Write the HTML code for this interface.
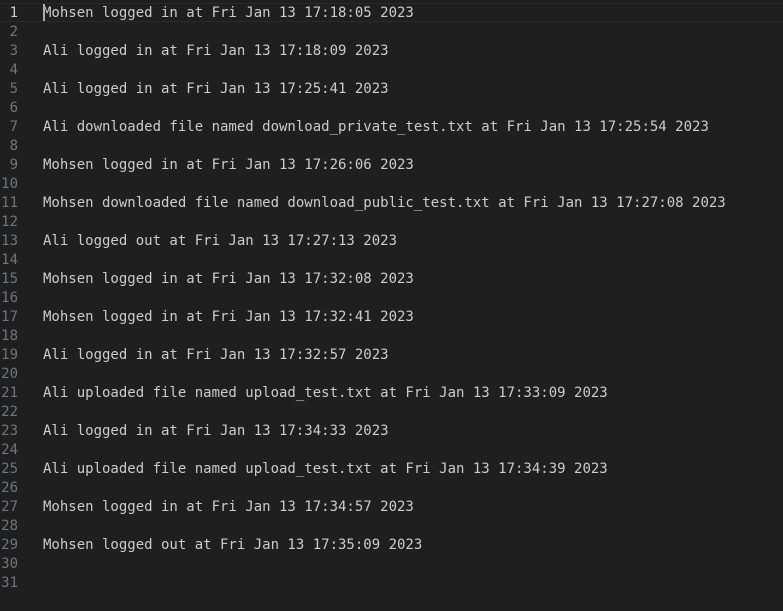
<!DOCTYPE html>
<html><head><style>
html,body{margin:0;padding:0;background:#1f1f1f;width:783px;height:611px;overflow:hidden}
.ed{position:relative;padding-top:4px;font-family:"DejaVu Sans Mono","Liberation Mono",monospace;font-size:14px;}
.l{height:19px;line-height:19px;position:relative;white-space:pre;color:#cccccc}
.n{position:absolute;left:0;width:18px;text-align:right;color:#6e7681}
.t{position:absolute;left:43px}
.cur{border-top:1px solid #2a2a2a;border-bottom:1px solid #2a2a2a;height:17px;line-height:17px;margin-top:-1px;margin-bottom:1px}
.cur .n,.cur .t{top:1px}
.cur .n{color:#cccccc}
.caret{position:absolute;left:43px;top:0;width:2px;height:17px;background:#aeafad}
</style></head><body><div class="ed">
<div class="l cur"><span class="n">1</span><span class="t">Mohsen logged in at Fri Jan 13 17:18:05 2023</span><span class="caret"></span></div>
<div class="l"><span class="n">2</span></div>
<div class="l"><span class="n">3</span><span class="t">Ali logged in at Fri Jan 13 17:18:09 2023</span></div>
<div class="l"><span class="n">4</span></div>
<div class="l"><span class="n">5</span><span class="t">Ali logged in at Fri Jan 13 17:25:41 2023</span></div>
<div class="l"><span class="n">6</span></div>
<div class="l"><span class="n">7</span><span class="t">Ali downloaded file named download_private_test.txt at Fri Jan 13 17:25:54 2023</span></div>
<div class="l"><span class="n">8</span></div>
<div class="l"><span class="n">9</span><span class="t">Mohsen logged in at Fri Jan 13 17:26:06 2023</span></div>
<div class="l"><span class="n">10</span></div>
<div class="l"><span class="n">11</span><span class="t">Mohsen downloaded file named download_public_test.txt at Fri Jan 13 17:27:08 2023</span></div>
<div class="l"><span class="n">12</span></div>
<div class="l"><span class="n">13</span><span class="t">Ali logged out at Fri Jan 13 17:27:13 2023</span></div>
<div class="l"><span class="n">14</span></div>
<div class="l"><span class="n">15</span><span class="t">Mohsen logged in at Fri Jan 13 17:32:08 2023</span></div>
<div class="l"><span class="n">16</span></div>
<div class="l"><span class="n">17</span><span class="t">Mohsen logged in at Fri Jan 13 17:32:41 2023</span></div>
<div class="l"><span class="n">18</span></div>
<div class="l"><span class="n">19</span><span class="t">Ali logged in at Fri Jan 13 17:32:57 2023</span></div>
<div class="l"><span class="n">20</span></div>
<div class="l"><span class="n">21</span><span class="t">Ali uploaded file named upload_test.txt at Fri Jan 13 17:33:09 2023</span></div>
<div class="l"><span class="n">22</span></div>
<div class="l"><span class="n">23</span><span class="t">Ali logged in at Fri Jan 13 17:34:33 2023</span></div>
<div class="l"><span class="n">24</span></div>
<div class="l"><span class="n">25</span><span class="t">Ali uploaded file named upload_test.txt at Fri Jan 13 17:34:39 2023</span></div>
<div class="l"><span class="n">26</span></div>
<div class="l"><span class="n">27</span><span class="t">Mohsen logged in at Fri Jan 13 17:34:57 2023</span></div>
<div class="l"><span class="n">28</span></div>
<div class="l"><span class="n">29</span><span class="t">Mohsen logged out at Fri Jan 13 17:35:09 2023</span></div>
<div class="l"><span class="n">30</span></div>
<div class="l"><span class="n">31</span></div>
</div></body></html>
